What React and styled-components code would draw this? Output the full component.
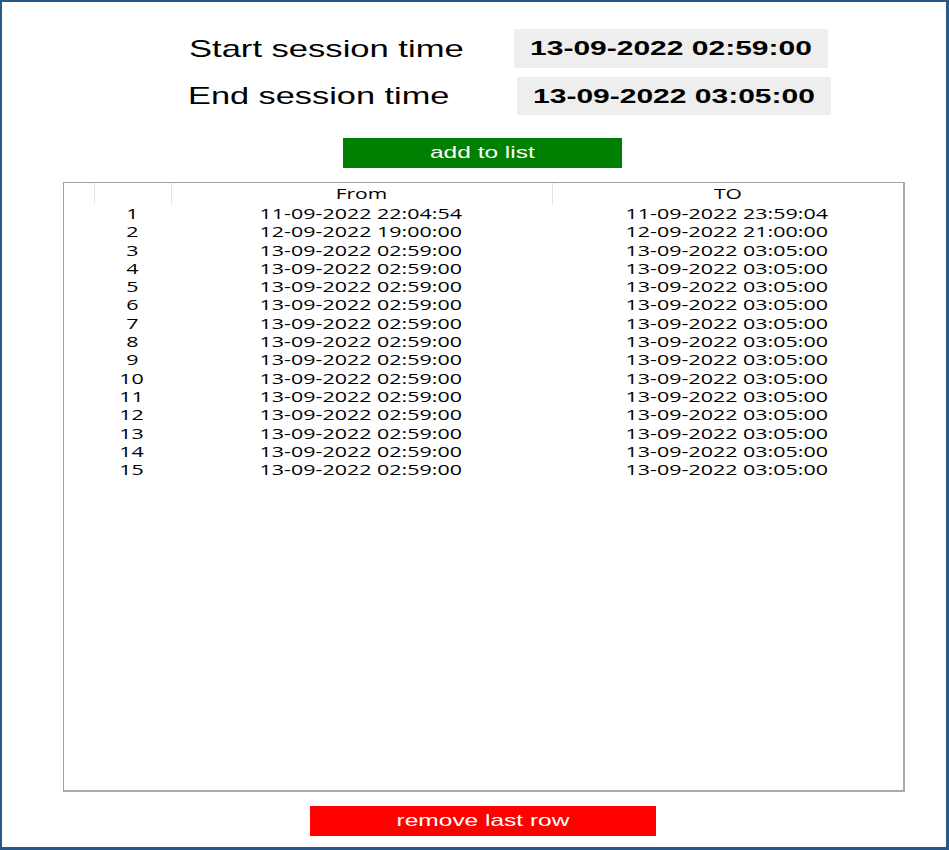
import styled, { createGlobalStyle } from 'styled-components';

const GlobalStyle = createGlobalStyle`
  html, body {
    margin: 0;
    padding: 0;
    background: #ffffff;
  }
`;

const Frame = styled.div`
  width: 949px;
  height: 850px;
  box-sizing: border-box;
  border: 2px solid #2b5987;
  border-right-width: 3px;
  border-bottom-width: 3px;
  background: #ffffff;
  display: flex;
  flex-direction: column;
  padding-top: 27px;
`;

const SessionRow = styled.div`
  display: flex;
  align-items: center;
  height: ${(p) => p.$height}px;
  padding-left: ${(p) => p.$indent}px;
  margin-bottom: ${(p) => p.$gap || 0}px;
`;

// the shot is stretched sideways, so every text is widened the same way
const Wide = styled.span`
  display: inline-block;
  white-space: nowrap;
  transform: scaleX(${(p) => p.$sx || 1.44});
  transform-origin: ${(p) => p.$origin || 'center'};
`;

const Label = styled.div`
  width: ${(p) => p.$width}px;
  font-family: 'Liberation Sans', Arial, sans-serif;
  font-size: 24px;
  color: #000000;
`;

const ValueBox = styled.div`
  width: 314px;
  height: 100%;
  background: #eeeeee;
  display: flex;
  align-items: center;
  justify-content: center;
  font-family: 'Liberation Sans', Arial, sans-serif;
  font-weight: bold;
  font-size: 20px;
  color: #000000;
`;

const Column = styled.div`
  display: flex;
  flex-direction: column;
  align-items: center;
  padding-left: 17px;
  padding-top: 23px;
`;

const ActionButton = styled.button`
  width: ${(p) => p.$width}px;
  height: 30px;
  border: none;
  padding: 0;
  margin: 0;
  background: ${(p) => p.$bg};
  color: #ffffff;
  font-family: 'Liberation Sans', Arial, sans-serif;
  font-size: 17px;
  display: flex;
  align-items: center;
  justify-content: center;
  cursor: pointer;
`;

const Table = styled.div`
  width: 842px;
  height: 610px;
  box-sizing: border-box;
  margin: 14px 0 14px 2px;
  border: 1px solid #a3a3a3;
  border-right: 2px solid #aaaaaa;
  border-bottom: 2px solid #aaaaaa;
  background: #ffffff;
  font-family: 'Open Sans', 'Noto Sans', sans-serif;
  font-size: 15px;
  color: #000000;
`;

const Grid = styled.div`
  display: grid;
  grid-template-columns: 30px 77px 381px 1fr;
  height: ${(p) => p.$height}px;
  line-height: ${(p) => p.$height}px;
`;

const HeadCell = styled.div`
  text-align: center;
  border-left: ${(p) => (p.$first ? 'none' : '1px solid #e3e3e3')};
  overflow: hidden;
`;

const Cell = styled.div`
  text-align: center;
  overflow: hidden;
`;

const rows = [
  ['11-09-2022 22:04:54', '11-09-2022 23:59:04'],
  ['12-09-2022 19:00:00', '12-09-2022 21:00:00'],
  ...Array.from({ length: 13 }, () => ['13-09-2022 02:59:00', '13-09-2022 03:05:00']),
];

export default function App() {
  return (
    <>
      <GlobalStyle />
      <Frame>
        <SessionRow $height={39} $indent={187} $gap={9}>
          <Label $width={325}>
            <Wide $origin="left">Start session time</Wide>
          </Label>
          <ValueBox>
            <Wide $sx={1.5}>13-09-2022 02:59:00</Wide>
          </ValueBox>
        </SessionRow>
        <SessionRow $height={38} $indent={186}>
          <Label $width={329}>
            <Wide $origin="left" $sx={1.43}>End session time</Wide>
          </Label>
          <ValueBox>
            <Wide $sx={1.5}>13-09-2022 03:05:00</Wide>
          </ValueBox>
        </SessionRow>
        <Column>
          <ActionButton $width={279} $bg="#008000">
            <Wide>add to list</Wide>
          </ActionButton>
          <Table>
            <Grid $height={21}>
              <HeadCell $first />
              <HeadCell />
              <HeadCell>
                <Wide $sx={1.4}>From</Wide>
              </HeadCell>
              <HeadCell>
                <Wide $sx={1.4}>TO</Wide>
              </HeadCell>
            </Grid>
            {rows.map(([from, to], i) => (
              <Grid key={i} $height={18.3}>
                <Cell />
                <Cell>
                  <Wide $sx={1.43}>{i + 1}</Wide>
                </Cell>
                <Cell>
                  <Wide $sx={1.43}>{from}</Wide>
                </Cell>
                <Cell>
                  <Wide $sx={1.43}>{to}</Wide>
                </Cell>
              </Grid>
            ))}
          </Table>
          <ActionButton $width={346} $bg="#ff0000">
            <Wide>remove last row</Wide>
          </ActionButton>
        </Column>
      </Frame>
    </>
  );
}
